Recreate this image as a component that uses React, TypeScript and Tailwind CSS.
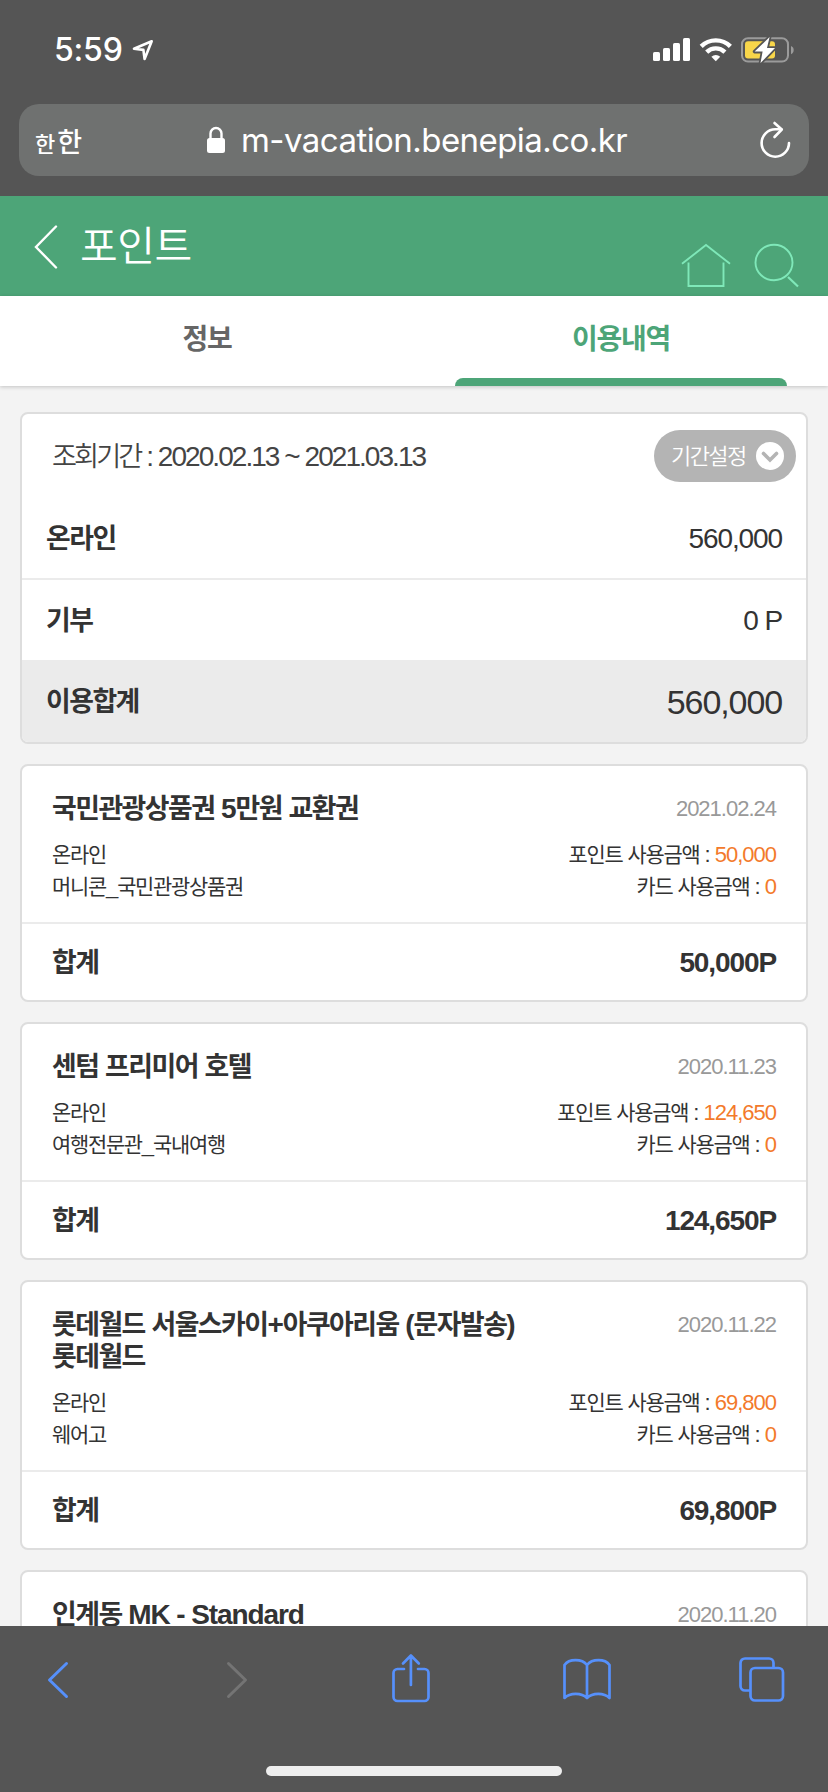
type Usage = {
  title: string[]
  date: string
  place?: string
  point?: string
}

const usages: Usage[] = [
  {
    title: ["국민관광상품권 5만원 교환권"],
    date: "2021.02.24",
    place: "머니콘_국민관광상품권",
    point: "50,000",
  },
  {
    title: ["센텀 프리미어 호텔"],
    date: "2020.11.23",
    place: "여행전문관_국내여행",
    point: "124,650",
  },
  {
    title: ["롯데월드 서울스카이+아쿠아리움 (문자발송)", "롯데월드"],
    date: "2020.11.22",
    place: "웨어고",
    point: "69,800",
  },
  {
    title: ["인계동 MK - Standard"],
    date: "2020.11.20",
  },
]

// Hangul glyphs are set a little tighter than the latin ones around them
const Text = ({ children, hangul = "text-[0.96em] tracking-[-0.057em]" }: { children: string; hangul?: string }) => (
  <>
    {children.split(/([가-힣]+)/).map((part, i) =>
      i % 2 === 1 ? (
        <span key={i} className={hangul}>{part}</span>
      ) : (
        part
      )
    )}
  </>
)

const SmallText = ({ children }: { children: string }) => (
  <Text hangul="text-[0.95em] tracking-[-0.06em]">{children}</Text>
)

const StatusBar = () => (
  <div className="flex h-[104px] justify-between pl-[54px] pr-[33px] font-['Inter',sans-serif] text-white">
    <div className="flex h-[100px] items-center gap-[9px]">
      <span className="text-[32px] font-medium leading-none tracking-[-0.2px]">5:59</span>
      <svg width="22" height="22" viewBox="0 0 22 22" fill="none" stroke="currentColor" strokeWidth="2.6" strokeLinejoin="round">
        <path d="M19.7 2.2 2 9.7l9.4 1.2 1.2 9.1z" />
      </svg>
    </div>
    <div className="flex h-[100px] items-center">
      <svg width="38" height="24" viewBox="0 0 38 24" fill="currentColor">
        <rect x="0" y="14" width="7" height="9" rx="1.6" />
        <rect x="10" y="10" width="7" height="13" rx="1.6" />
        <rect x="20" y="5" width="7" height="18" rx="1.6" />
        <rect x="30" y="0" width="7" height="23" rx="1.6" />
      </svg>
      <svg className="ml-2" width="34" height="24" viewBox="0 0 34 24" fill="none" stroke="currentColor" strokeWidth="4.4">
        <path d="M2.2 8.4a20.8 20.8 0 0 1 29.2 0" />
        <path d="M7.7 14.1a13 13 0 0 1 18.2 0" />
        <path d="M16.8 23.3l-4.4-4.5a6.4 6.4 0 0 1 8.8 0z" fill="currentColor" stroke="none" />
      </svg>
      <svg className="ml-[8px]" width="54" height="28" viewBox="0 0 54 28" fill="none">
        <rect x="1" y="2.2" width="46" height="23.4" rx="6" stroke="#9b9b9b" strokeWidth="2" />
        <path d="M50 10c3.6 1.2 3.6 7 0 8.2z" fill="#9b9b9b" />
        <rect x="4" y="5.2" width="30" height="17.4" rx="3" fill="#f8d64a" />
        <path d="M28.6 1 13.6 15.6h8L19.5 27 34 12h-8z" fill="#fff" stroke="#555" strokeWidth="3.6" strokeLinejoin="round" paintOrder="stroke" />
      </svg>
    </div>
  </div>
)

const AddressBar = () => (
  <div className="mx-[19px] flex h-[72px] items-center rounded-[20px] bg-[#6f7170] pl-4 pr-[18px] text-white">
    <div className="flex w-[172px] items-baseline font-['Noto_Sans_CJK_KR',sans-serif] font-medium leading-none">
      <span className="text-[22px]">한</span>
      <span className="ml-[2px] text-[27px]">한</span>
    </div>
    <svg width="18" height="28" viewBox="0 0 18 28" fill="none">
      <path d="M3.5 13V7.5a5.5 5.5 0 0 1 11 0V13" stroke="currentColor" strokeWidth="2.4" />
      <rect y="12" width="18" height="15" rx="2.5" fill="currentColor" />
    </svg>
    <span className="ml-4 flex-1 whitespace-nowrap font-['Inter',sans-serif] text-[33px] leading-none tracking-[-0.55px]">m-vacation.benepia.co.kr</span>
    <svg width="32" height="38" viewBox="0 0 32 38" fill="none" stroke="currentColor" strokeWidth="2.6" strokeLinecap="round" strokeLinejoin="round">
      <path d="M30 22a13.7 13.7 0 1 1-13.7-13.7h6" />
      <path d="M15.5 2l7.3 6.5-7.3 7.5" />
    </svg>
  </div>
)

const Header = () => (
  <header className="flex h-[100px] shrink-0 justify-between bg-[#4da578] pl-[34px] pr-[28px]">
    <div className="flex items-center pt-[2px]">
      <svg width="24" height="44" viewBox="0 0 24 44" fill="none" stroke="#fff" strokeWidth="2.4" strokeLinecap="round">
        <path d="M22 1.5 2 22l20 20.500" />
      </svg>
      <h1 className="ml-[22px] text-[41px] font-[350] leading-none tracking-[-0.5px] text-white">포인트</h1>
    </div>
    <div className="flex items-end gap-[23px] pb-[8px] text-[#7fe8b9]">
      <svg width="50" height="45" viewBox="0 0 50 45" fill="none" stroke="currentColor" strokeWidth="1.9">
        <path d="M1 20.8 25 2l24 18.8M7.5 19.5v23.5h35V19.5" />
      </svg>
      <svg width="46" height="45" viewBox="0 0 46 45" fill="none" stroke="currentColor" strokeWidth="1.9">
        <ellipse cx="20" cy="19.5" rx="18.5" ry="17.7" />
        <path d="M34 34l10 9.5" strokeWidth="2.2" />
      </svg>
    </div>
  </header>
)

const Tabs = () => (
  <nav className="relative grid h-[90px] shrink-0 grid-cols-2 bg-white text-center text-[28px] font-bold leading-[88px] tracking-[-1.300px] shadow-[0_1px_4px_rgba(0,0,0,0.2)]">
    <div className="text-[#666]">정보</div>
    <div className="relative text-[#4da578]">
      이용내역
      <span className="absolute bottom-0 left-[41px] h-2 w-[332px] rounded-t-[8px] bg-[#4da578]" />
    </div>
  </nav>
)

const Summary = () => (
  <section className="shrink-0 overflow-hidden rounded-lg border-2 border-[#ddd] bg-white text-[28px] tracking-[-1.1px]">
    <div className="flex h-[84px] items-center justify-between pl-[30px] pr-[10px]">
      <p className="pt-[2px] tracking-[-1.95px] text-[#444]">
        <Text hangul="text-[0.97em] font-[350] tracking-[-2.9px]">조회기간 : 2020.02.13 ~ 2021.03.13</Text>
      </p>
      <button className="flex h-[52px] w-[142px] items-center justify-between rounded-full bg-[#b4b4b4] pl-[17px] pr-3 text-[22px] tracking-[-1.6px] text-white">
        <span className="font-[350]">기간설정</span>
        <svg width="28" height="28" viewBox="0 0 28 28" fill="none">
          <circle cx="14" cy="14" r="14" fill="#fff" />
          <path d="M7.5 11.5l6.5 6.5 6.5-6.5" stroke="#b4b4b4" strokeWidth="3.6" strokeLinecap="round" />
        </svg>
      </button>
    </div>
    <div className="flex h-[80px] items-center justify-between px-6 pt-[2px]">
      <b><Text>온라인</Text></b>
      <span>560,000</span>
    </div>
    <div className="flex h-[82px] items-center justify-between border-t-2 border-[#ebebeb] px-6 pt-[2px]">
      <b><Text>기부</Text></b>
      <span>0 P</span>
    </div>
    <div className="flex h-[82px] items-center justify-between bg-[#ebebeb] px-6 pt-[2px]">
      <b><Text>이용합계</Text></b>
      <span className="text-[34px]">560,000</span>
    </div>
  </section>
)

const UsageCard = ({ title, date, place, point }: Usage) => (
  <section className="min-h-[236px] shrink-0 rounded-lg border-2 border-[#ddd] bg-white text-[22px] leading-8 tracking-[-1px]">
    <div className="px-[30px] pb-[19px] pt-[27px]">
      <div className="flex justify-between">
        <h2 className="text-[28px] font-bold leading-8 tracking-[-1.1px]">
          {title.map((line) => (
            <span key={line} className="block h-8"><Text>{line}</Text></span>
          ))}
        </h2>
        <span className="text-[#999]">{date}</span>
      </div>
      {place && (
        <div className="mt-[14px] flex justify-between">
          <div>
            <p className="h-8"><SmallText>온라인</SmallText></p>
            <p className="h-8"><SmallText>{place}</SmallText></p>
          </div>
          <div className="text-right">
            <p className="h-8"><SmallText>포인트 사용금액 : </SmallText><span className="text-[#f37a2b]">{point}</span></p>
            <p className="h-8"><SmallText>카드 사용금액 : </SmallText><span className="text-[#f37a2b]">0</span></p>
          </div>
        </div>
      )}
    </div>
    {point && (
      <div className="flex h-[78px] items-center justify-between border-t-2 border-[#ebebeb] px-[30px] pt-[2px] text-[28px] font-bold tracking-[-1.1px]">
        <span><Text>합계</Text></span>
        <span>{point}P</span>
      </div>
    )}
  </section>
)

const Toolbar = () => (
  <footer className="h-[166px] shrink-0 bg-[#555]">
    <div className="flex h-[140px] items-start pl-[47px] pt-[27px] text-[#5690fb]">
      <svg className="mt-2" width="22" height="38" viewBox="0 0 22 38" fill="none" stroke="currentColor" strokeWidth="3" strokeLinecap="round" strokeLinejoin="round">
        <path d="M19.5 2.5 2.5 19l17 16.5" />
      </svg>
      <svg className="ml-[157px] mt-2" width="22" height="38" viewBox="0 0 22 38" fill="none" stroke="#747474" strokeWidth="3" strokeLinecap="round" strokeLinejoin="round">
        <path d="M2.5 2.5l17 16.5-17 16.5" />
      </svg>
      <svg className="ml-[144px]" width="38" height="50" viewBox="0 0 38 50" fill="none" stroke="currentColor" strokeWidth="2.7" strokeLinecap="round" strokeLinejoin="round">
        <path d="M12 16H5.5a4 4 0 0 0-4 4v24a4 4 0 0 0 4 4h27a4 4 0 0 0 4-4V20a4 4 0 0 0-4-4H26" />
        <path d="M18.9 32V2.5M11 10.5l7.9-8 7.9 8" />
      </svg>
      <svg className="ml-[133px] mt-[5px]" width="48" height="42" viewBox="0 0 48 42" fill="none" stroke="currentColor" strokeWidth="2.7" strokeLinejoin="round">
        <path d="M24 7C19 .5 6 .5 1.500 7v33c5.500-5.500 17-5.500 22.500 0 5.500-5.500 17-5.500 22.500 0V7C42 .5 29 .5 24 7zM24 7v33" />
      </svg>
      <svg className="ml-[128px] mt-1" width="46" height="45" viewBox="0 0 46 45" fill="none" stroke="currentColor" strokeWidth="2.7">
        <path d="M11 33.5H6a4.500 4.500 0 0 1-4.500-4.500V6A4.500 4.500 0 0 1 6 1.500h24A4.500 4.500 0 0 1 34.500 6v5" />
        <rect x="11.5" y="11" width="32.5" height="32.5" rx="4.5" />
      </svg>
    </div>
    <div className="mx-auto h-[10px] w-[296px] rounded-full bg-[#eee]" />
  </footer>
)

const App = () => {
  return (
    <div className="flex h-[1792px] w-[828px] flex-col overflow-hidden bg-[#f3f3f3] font-['Liberation_Sans','Noto_Sans_CJK_KR',sans-serif] text-[#333]">
      <div className="h-[196px] shrink-0 bg-[#555]">
        <StatusBar />
        <AddressBar />
      </div>
      <Header />
      <Tabs />
      <main className="flex min-h-0 flex-1 flex-col gap-5 overflow-hidden px-5 pt-[26px]">
        <Summary />
        {usages.map((usage) => (
          <UsageCard key={usage.date} {...usage} />
        ))}
      </main>
      <Toolbar />
    </div>
  )
}

export default App
